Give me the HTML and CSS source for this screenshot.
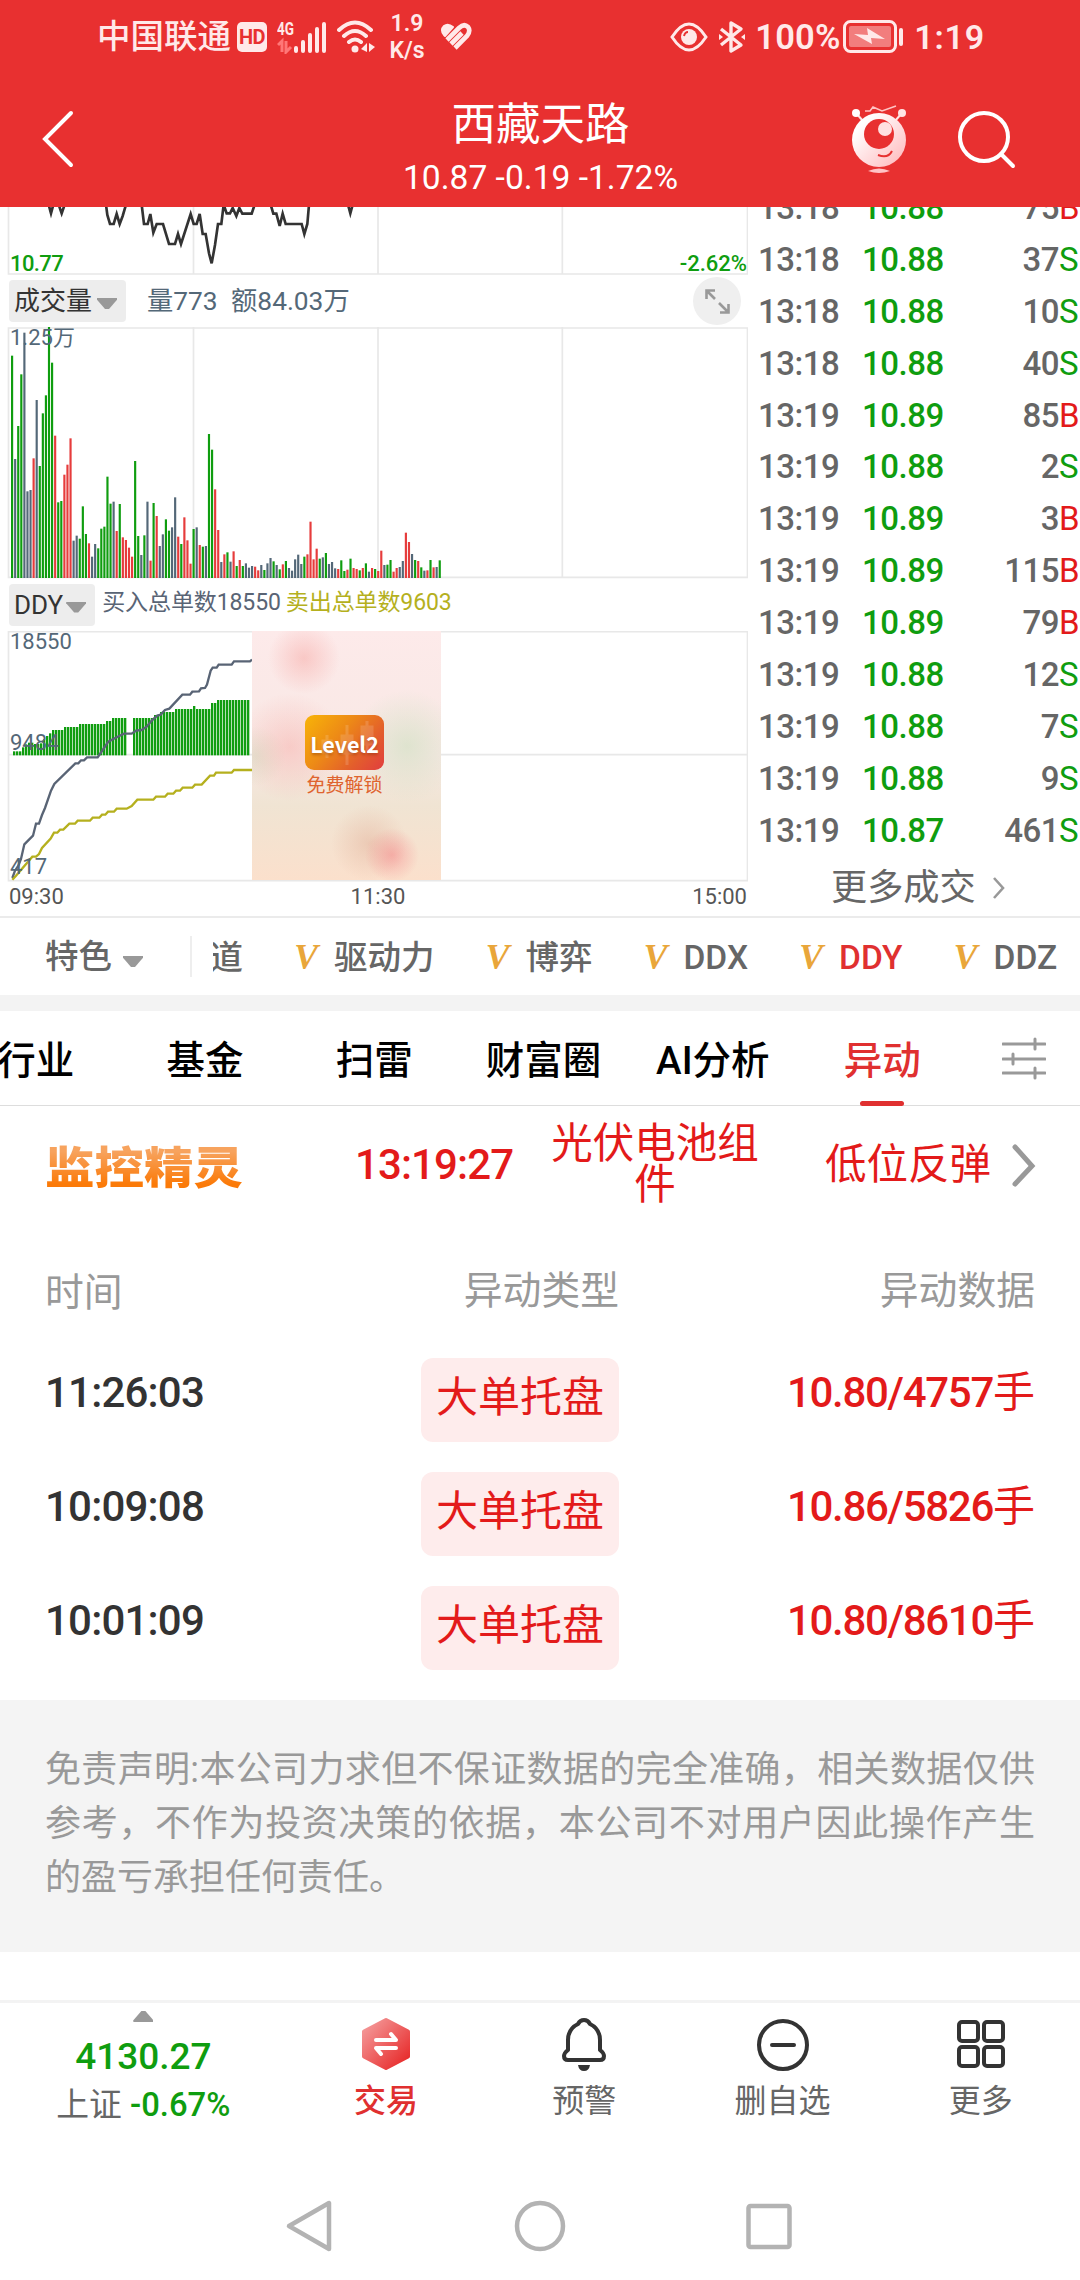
FILE: index.html
```html
<!DOCTYPE html>
<html lang="zh-CN">
<head>
  <meta charset="UTF-8" />
  <title>西藏天路</title>
  <meta name="viewport" content="width=device-width, initial-scale=1.0" />
  <link rel="stylesheet" href="styles.css">
</head>
<body>
  <header class="top">
    <!-- system status bar -->
    <div class="status">
      <div class="status-left">
        <span class="carrier">中国联通</span>
        <span class="hd">HD</span>
        <svg class="signal" width="50" height="34" viewBox="0 0 50 34">
          <text x="0" y="15" class="sig-text" textLength="17" lengthAdjust="spacingAndGlyphs">4G</text>
          <path d="M1 25l4-4v11M9 21v11l5-5" fill="none" stroke="#ff7777" stroke-width="3"/>
          <path d="M19 28v3M26 22v9M33 15v16M40 9v22M47 4v27" stroke="#ffe9e9" stroke-width="4" stroke-linecap="round"/>
        </svg>
        <svg class="wifi" width="38" height="34" viewBox="0 0 38 34">
          <path d="M2 10Q18-5 34 10M7 16Q18 6 29 16M12 22Q18 17 24 22" fill="none" stroke="#ffe9e9" stroke-width="4" stroke-linecap="round"/>
          <circle cx="18" cy="29" r="3.5" fill="#ffe9e9"/>
          <path d="M24 29l6-6v9zM32 23v9l6-5z" fill="#ffe9e9"/>
        </svg>
        <span class="speed">1.9<br>K/s</span>
        <svg class="heart" width="32" height="30" viewBox="0 0 32 30">
          <path d="M4 13Q0 8 4 4Q8 1 13 5L5 14z" fill="#ffe9e9" stroke="#ffe9e9" stroke-width="2" stroke-linejoin="round"/>
          <path d="M7 18L19 6Q24 1 28 5Q31 9 27 14L15 26M11 22L22 11" fill="none" stroke="#ffe9e9" stroke-width="4.6"/>
        </svg>
      </div>
      <div class="status-right">
        <svg width="38" height="32" viewBox="0 0 38 32">
          <path d="M2 16Q19-10 36 16Q19 42 2 16z" fill="none" stroke="#ffe9e9" stroke-width="3"/>
          <circle cx="19" cy="16" r="8" fill="#ffe9e9"/>
          <path d="M14 15q1-4 4-4" fill="none" stroke="#e83030" stroke-width="2"/>
        </svg>
        <svg class="bt" width="28" height="34" viewBox="0 0 28 34">
          <path d="M3 9L23 25L13 31V3L23 9L3 25" fill="none" stroke="#ffe9e9" stroke-width="3.4" stroke-linejoin="round"/>
          <path d="M1 14l4 3-4 3zM27 14l-4 3 4 3z" fill="#ffe9e9"/>
        </svg>
        <span class="battery-text">100%</span>
        <svg class="battery" width="62" height="34" viewBox="0 0 62 34">
          <rect x="1.5" y="1.5" width="51" height="30" rx="6" fill="none" stroke="#ffe9e9" stroke-width="3"/>
          <rect x="6" y="6" width="42" height="21" rx="2" fill="#f27d7d"/>
          <path d="M11 14l14 1-1-7 18 11-14-1 1 6z" fill="#ffe9e9"/>
          <rect x="56" y="8" width="4" height="18" rx="2" fill="#ffe9e9"/>
        </svg>
        <span class="clock">1:19</span>
      </div>
    </div>

    <!-- title bar -->
    <div class="title-bar">
      <svg class="back" width="32" height="58" viewBox="0 0 32 58">
        <path d="M29 3L3 29L29 55" fill="none" stroke="#fff" stroke-width="4" stroke-linecap="round"/>
      </svg>
      <div class="stock">
        <h1>西藏天路</h1>
        <p>10.87 -0.19 -1.72%</p>
      </div>
      <div class="title-actions">
        <svg width="58" height="70" viewBox="0 0 58 70">
          <defs>
            <linearGradient id="bot" x1="0" y1="0" x2="1" y2="1">
              <stop offset="0.2" stop-color="#fff"/><stop offset="1" stop-color="#ffb5b8"/>
            </linearGradient>
          </defs>
          <path d="M5 8L12 16M51 8L44 16" stroke="#ffe4e4" stroke-width="2"/>
          <circle cx="5" cy="8" r="4" fill="#fff"/><circle cx="51" cy="8" r="4" fill="#ffe4e4"/>
          <path d="M14 6h5l3-4 9 4L45 1" fill="none" stroke="#ffc4c4" stroke-width="1.6"/>
          <circle cx="28" cy="35" r="27" fill="url(#bot)"/>
          <circle cx="28" cy="29" r="15" fill="#e83030"/>
          <circle cx="34" cy="24" r="7" fill="#ffe0e0"/>
          <path d="M27 50Q37 54 41 46" fill="none" stroke="#e83030" stroke-width="2"/>
          <path d="M17 66q11-5 22 0q-11 4-22 0z" fill="#ffc4c6"/>
        </svg>
        <svg class="search" width="60" height="62" viewBox="0 0 60 62">
          <circle cx="27" cy="28" r="24" fill="none" stroke="#fff" stroke-width="4"/>
          <path d="M44 45L56 57" stroke="#fff" stroke-width="4" stroke-linecap="round"/>
        </svg>
      </div>
    </div>
  </header>

  <main>
    <section class="quote">
      <div class="charts">
        <!-- price -->
        <div class="chart price-chart">
          <svg width="748" height="68" viewBox="0 0 2244 204">
            <path class="grid" d="M25.5 0V201H2242.5V0M580.5 0V201M1134 0V201M1687 0V201"/>
            <g class="price-line" transform="translate(0,-21)">
              <polyline points="146,14 153,40 160,14"/>
              <polyline points="176,14 185,40 194,14"/>
              <polyline points="318,14 322,45 330,72 341,72 350,42 359,72 368,48 378,14"/>
              <polyline points="425,14 432,72 443,72 451,42 460,98 470,72 489,72 507,132 525,132 534,102 543,132 572,42 581,72 590,72 599,42 608,102 617,102 627,160 635,190 645,135 654,72 664,72 671,14 680,40 690,40 698,24 709,48 718,24 727,41 755,41 764,14"/>
              <polyline points="812,14 820,41 829,41 839,78 848,41 857,72 905,72 913,102 922,72 927,14"/>
              <polyline points="1044,14 1051,40 1058,14"/>
            </g>
          </svg>
          <span class="low">10.77</span>
          <span class="low-pct">-2.62%</span>
        </div>

        <!-- volume -->
        <div class="chart-head volume-head">
          <button class="pick">成交量<i class="caret"></i></button>
          <span class="volume-info">量773&ensp;额84.03万</span>
          <svg class="expand" width="48" height="48" viewBox="0 0 48 48">
            <circle cx="24" cy="24" r="24" fill="#efefef"/>
            <path d="M22 13.5H13.5V22M14 14L22 22M27 35.5H35.5V27M35 35L26 26" fill="none" stroke="#999" stroke-width="2.6"/>
          </svg>
        </div>
        <div class="chart volume">
          <span class="mark mark-top">1.25万</span>
          <svg id="volumeChart" width="748" height="252" viewBox="0 0 2244 756">
            <path class="grid" d="M25.5 3H2242.5V751H25.5ZM580.5 0V751M1134 0V751M1687 0V751"/>
          </svg>
        </div>

        <!-- ddy -->
        <div class="chart-head ddy-head">
          <button class="pick">DDY<i class="caret"></i></button>
          <span class="buy">买入总单数18550</span>
          <span class="sell">卖出总单数9603</span>
        </div>
        <div class="chart ddy">
          <svg id="ddyChart" width="748" height="252" viewBox="0 0 2244 756">
            <path class="grid" d="M25.5 2H2242.5V749H25.5ZM25.5 371H2242.5"/>
            <g id="ddyBars"></g>
            <g transform="translate(0,-181)" fill="none" stroke-width="7">
              <polyline stroke="#596475" points="37,922 45,900 55,885 63,865 73,821 99,795 108,759 117,759 126,733 135,712 153,660 163,640 226,578 235,578 243,569 252,569 261,560 293,560 310,535 325,513 350,500 372,489 395,489 408,480 425,478 440,468 455,450 472,435 482,432 495,418 508,414 547,372 570,372 577,363 597,362 603,353 615,352 621,342 632,300 638,291 650,291 656,282 695,282 702,272 750,272 756,267"/>
              <polyline stroke="#b5b01e" points="37,927 48,915 97,858 108,858 117,850 126,832 152,804 162,786 172,786 180,777 190,777 208,759 225,759 233,750 270,750 278,741 298,741 306,732 316,732 324,723 342,723 350,714 380,714 395,706 412,687 460,687 468,678 495,678 503,669 520,669 528,660 540,660 548,651 577,651 585,642 605,642 630,615 642,615 648,606 695,606 702,598 756,598"/>
            </g>
          </svg>
          <span class="mark mark-top">18550</span>
          <span class="mark mark-mid">9484</span>
          <span class="mark mark-low">417</span>
          <div class="lock">
            <div class="level2">
              <svg width="79" height="55" viewBox="0 0 79 55">
                <path d="M22 20V43M18 26h8v11h-8zM42 10V50M37 21h10v17H37zM62 6V36M57 12h10v17H57z" fill="#fff" stroke="#fff" stroke-width="3" opacity=".14"/>
              </svg>
              <b>Level2</b>
            </div>
            <span>免费解锁</span>
          </div>
        </div>
        <div class="axis"><span>09:30</span><span>11:30</span><span>15:00</span></div>
      </div>

      <!-- tick list, filled by charts.js -->
      <div class="ticks">
        <div id="tickRows"></div>
        <a class="more">更多成交
          <svg width="14" height="24" viewBox="0 0 14 24"><path d="M2 2L11 12L2 22" fill="none" stroke="#999" stroke-width="2.6"/></svg>
        </a>
      </div>
    </section>

    <nav class="features">
      <div class="feature-pick">特色<i class="caret"></i></div>
      <div class="feature-list">
        <span class="cut">道</span>
        <span><em>V</em>驱动力</span>
        <span><em>V</em>博弈</span>
        <span><em>V</em>DDX</span>
        <span class="on"><em>V</em>DDY</span>
        <span><em>V</em>DDZ</span>
      </div>
    </nav>

    <nav class="tabs">
      <span>行业</span>
      <span>基金</span>
      <span>扫雷</span>
      <span>财富圈</span>
      <span>AI分析</span>
      <span class="on">异动</span>
      <svg width="44" height="44" viewBox="0 0 44 44">
        <path d="M1 8H43M1 23H43M1 37H43" stroke="#999" stroke-width="3" stroke-linecap="round"/>
        <path d="M33 3V13M11 18V28M33 32V42" stroke="#999" stroke-width="3" stroke-linecap="round"/>
      </svg>
    </nav>

    <section class="monitor">
      <strong class="monitor-logo">监控精灵</strong>
      <span class="monitor-time">13:19:27</span>
      <span class="monitor-name">光伏电池组件</span>
      <span class="monitor-type">低位反弹</span>
      <svg width="24" height="44" viewBox="0 0 24 44"><path d="M3 4L20 23L3 41" fill="none" stroke="#999" stroke-width="5" stroke-linecap="round"/></svg>
    </section>

    <section class="moves">
      <div class="move move-head"><span>时间</span><span>异动类型</span><span>异动数据</span></div>
      <div class="move"><span class="num">11:26:03</span><b>大单托盘</b><span class="data">10.80/4757<i>手</i></span></div>
      <div class="move"><span class="num">10:09:08</span><b>大单托盘</b><span class="data">10.86/5826<i>手</i></span></div>
      <div class="move"><span class="num">10:01:09</span><b>大单托盘</b><span class="data">10.80/8610<i>手</i></span></div>
    </section>

    <p class="disclaimer">免责声明:本公司力求但不保证数据的完全准确，相关数据仅供参考，不作为投资决策的依据，本公司不对用户因此操作产生的盈亏承担任何责任。</p>
  </main>

  <footer class="bottom">
    <div class="index">
      <i class="up"></i>
      <strong>4130.27</strong>
      <span>上证 <b>-0.67%</b></span>
    </div>
    <div class="action trade">
      <svg width="54" height="56" viewBox="0 0 54 56">
        <defs>
          <linearGradient id="hex" x1="0" y1="0" x2="1" y2="1">
            <stop offset="0" stop-color="#f5a0a0"/><stop offset="1" stop-color="#e62222"/>
          </linearGradient>
        </defs>
        <path d="M27 3L49 14.500V39.500L27 51L5 39.500V14.500Z" fill="url(#hex)" stroke="url(#hex)" stroke-width="4" stroke-linejoin="round"/>
        <path d="M17 23H37L32 17M37 31H17L22 37" fill="none" stroke="#fff" stroke-width="4" stroke-linecap="round" stroke-linejoin="round"/>
      </svg>
      <span>交易</span>
    </div>
    <div class="action">
      <svg width="54" height="56" viewBox="0 0 54 56" fill="none" stroke="#333" stroke-width="4" stroke-linejoin="round">
        <path d="M27 3Q31 3 33 7Q43 12 43 23V33Q47 36 47 39Q47 43 43 43H11Q7 43 7 39Q7 36 11 33V23Q11 12 21 7Q23 3 27 3z"/>
        <path d="M21 48h12q-1 6-6 6t-6-6z" fill="#333" stroke="none"/>
      </svg>
      <span>预警</span>
    </div>
    <div class="action">
      <svg width="54" height="56" viewBox="0 0 54 56" fill="none" stroke="#333" stroke-width="4">
        <circle cx="27" cy="28" r="24"/><path d="M16 28H38" stroke-linecap="round"/>
      </svg>
      <span>删自选</span>
    </div>
    <div class="action">
      <svg width="54" height="56" viewBox="0 0 54 56" fill="none" stroke="#333" stroke-width="4">
        <rect x="5" y="5" width="19" height="19" rx="3"/><rect x="30" y="5" width="19" height="19" rx="3"/>
        <rect x="5" y="30" width="19" height="19" rx="3"/><rect x="30" y="30" width="19" height="19" rx="3"/>
      </svg>
      <span>更多</span>
    </div>
  </footer>

  <div class="sysnav">
    <svg width="54" height="54" viewBox="0 0 54 54"><path d="M45 4V50L5 27Z"/></svg>
    <svg width="54" height="54" viewBox="0 0 54 54"><circle cx="27" cy="27" r="23"/></svg>
    <svg width="54" height="54" viewBox="0 0 54 54"><rect x="6.5" y="7" width="41" height="41" rx="2"/></svg>
  </div>

  <script src="charts.js"></script>
</body>
</html>
```
FILE: styles.css
```css
/* ---------- theme ---------- */
:root{
  --brand:#e83030;
  --red:#e31a1a;
  --green:#0f9d0f;
  --slate:#546878;
  --line:#ebebeb;
  --grey:#666;
  --muted:#999;
}

*,*::before,*::after{box-sizing:border-box;}
body{
  margin:0;
  width:1080px;
  height:2280px;
  overflow:hidden;
  display:flex;
  flex-direction:column;
  background:#fff;
  color:#333;
  font-family:Roboto,"Noto Sans CJK SC",sans-serif;
}
h1,p{margin:0;font-weight:400;}
svg{display:block;flex-shrink:0;}
button{border:none;margin:0;font-family:inherit;}

.caret{
  display:inline-block;
  width:20px;
  height:11px;
  background:#999;
  clip-path:polygon(0 0,100% 0,100% 15%,60% 100%,40% 100%,0 15%);
}

/* ---------- header ---------- */
.top{
  height:207px;
  flex-shrink:0;
  background:var(--brand);
  color:#fff;
}
.status{
  height:73px;
  padding:0 95px 0 97px;
  display:flex;
  justify-content:space-between;
  align-items:center;
  color:#ffe9e9;
}
.status-left,.status-right{display:flex;align-items:center;}
.carrier{font-size:33.5px;line-height:50px;font-weight:500;}
.hd{
  width:30px;
  height:30px;
  margin-left:6px;
  border-radius:5px;
  background:#ffe9e9;
  color:var(--brand);
  font-size:20px;
  font-weight:700;
  letter-spacing:-.5px;
  line-height:31px;
  text-align:center;
}
.signal{margin-left:10px;}
.sig-text{font-size:19px;font-weight:700;fill:#ffe9e9;}
.wifi{margin-left:10px;}
.speed{
  width:38px;
  margin-left:13px;
  font-size:23px;
  font-weight:600;
  line-height:27px;
  text-align:center;
}
.heart{margin-left:14px;}
.bt{margin-left:10px;}
.battery-text{width:84px;margin-left:9px;font-size:34.5px;font-weight:600;letter-spacing:.2px;white-space:nowrap;}
.battery{margin-left:4px;}
.clock{margin-left:9px;font-size:34px;font-weight:600;letter-spacing:.8px;}

.title-bar{
  height:134px;
  padding:0 63px 0 42px;
  display:grid;
  grid-template-columns:1fr auto 1fr;
}
.back{margin-top:37px;}
.stock{margin-left:22px;text-align:center;}
.stock h1{margin-top:19px;font-size:44.5px;line-height:66px;}
.stock p{font-size:33.6px;line-height:40px;}
.title-actions{
  display:flex;
  justify-content:flex-end;
  padding-top:32px;
}
.search{margin:4px 0 0 48px;}

/* ---------- charts ---------- */
.quote{
  height:711px;
  display:flex;
  border-bottom:2px solid var(--line);
}
.charts{width:748px;}
.chart{position:relative;}
.grid{fill:none;stroke:#e8e8e8;stroke-width:5;}
.price-line polyline{fill:none;stroke:#333;stroke-width:8;}

.low,.low-pct,.mark{
  position:absolute;
  font-size:22px;
  font-weight:500;
  line-height:24px;
}
.low{left:10px;top:45px;color:var(--green);letter-spacing:-.6px;}
.low-pct{right:1px;top:45px;color:var(--green);}
.mark{left:10px;color:var(--slate);font-weight:400;}
.volume .mark-top{top:-1px;line-height:24px;}
.ddy .mark-top{top:-1px;}
.mark-mid{top:100px;}
.mark-low{top:224px;}

.chart-head{display:flex;align-items:center;padding-left:9px;}
.volume-head{height:52px;}
.ddy-head{height:52px;padding-bottom:1px;font-size:23px;}
.pick{
  height:42px;
  padding:0 9px 0 5px;
  display:flex;
  align-items:center;
  gap:5px;
  border-radius:4px;
  background:#ededed;
  color:#333;
  font-size:26px;
  line-height:38px;
}
.ddy-head .pick{gap:3px;}
.pick .caret{margin-top:5px;}
.volume-info{margin-left:21px;font-size:26.3px;color:var(--slate);line-height:38px;}
.expand{margin-left:auto;margin-right:7px;}
.volume,.ddy{height:252px;}
.buy{margin:-3px 0 0 7px;color:#596475;line-height:36px;letter-spacing:-.1px;}
.sell{margin:-3px 0 0 5px;color:#b5b01e;line-height:36px;letter-spacing:-.1px;}

.lock{
  position:absolute;
  left:252px;
  top:0;
  width:189px;
  height:249px;
  display:flex;
  flex-direction:column;
  align-items:center;
  padding:84px 4px 0 0;
  background:
    radial-gradient(circle at 52px 27px,rgba(244,140,135,.36) 0,transparent 36px),
    radial-gradient(circle at 140px 224px,rgba(244,110,120,.42) 0,transparent 27px),
    radial-gradient(circle at 117px 212px,rgba(215,150,125,.32) 0,transparent 38px),
    radial-gradient(circle at 38px 116px,rgba(247,160,155,.4) 0,transparent 54px),
    radial-gradient(circle at 155px 115px,rgba(205,224,192,.6) 0,transparent 56px),
    radial-gradient(circle at 4px 125px,rgba(205,222,190,.5) 0,transparent 30px),
    linear-gradient(180deg,#fdeaea 0%,#f8e8e4 50%,#f0e4d3 70%,#fbe0cc 100%);
}
.level2{
  position:relative;
  width:79px;
  height:55px;
  border-radius:9px;
  background:linear-gradient(130deg,#f8b408 0%,#ed8a16 40%,#e35e2c 72%,#e13d3f 100%);
}
.level2 b{
  position:absolute;
  inset:0;
  color:#fff;
  font:600 21.5px/57px "Noto Sans CJK SC",sans-serif;
  text-align:center;
  text-shadow:0 2px 3px rgba(120,40,0,.4);
}
.lock>span{margin-top:3px;font-size:19px;line-height:26px;color:#df642f;}

.axis{
  display:flex;
  justify-content:space-between;
  padding:1px 1px 0 9px;
  font-size:22px;
  line-height:26px;
  color:#555;
}

/* ---------- ticks ---------- */
.ticks{
  width:332px;
  overflow:hidden;
  font-size:33px;
  font-weight:500;
  color:var(--grey);
}
#tickRows{margin-top:-26px;}
.tick{
  height:51.9px;
  display:grid;
  grid-template-columns:104px 90px 1fr 21px;
  padding-left:10px;
  line-height:54px;
  letter-spacing:-.5px;
}
.tick .vol{text-align:right;}
.tick .price{color:var(--green);}
.tick .s{color:var(--green);font-weight:400;}
.tick .b{color:var(--red);font-weight:400;}
.more{
  display:flex;
  align-items:center;
  gap:16px;
  margin:8px 0 0 83px;
  font-size:36.2px;
  font-weight:400;
  line-height:48px;
}

/* ---------- feature strip ---------- */
.features{
  height:93px;
  display:flex;
  align-items:center;
  border-bottom:16px solid #f3f3f3;
  color:var(--grey);
  font-size:33.5px;
  font-weight:500;
}
.feature-pick{
  width:192px;
  height:41px;
  padding-left:45px;
  border-right:2px solid #eee;
  line-height:42px;
}
.feature-pick .caret{margin-left:11px;vertical-align:1px;}
.feature-list{display:flex;gap:51px;padding:3px 0 0 21px;line-height:44px;white-space:nowrap;}
.feature-list .cut{width:30px;direction:rtl;overflow:hidden;}
.feature-list em{
  display:inline-block;
  width:40px;
  color:#e9a63a;
  font:italic 700 36px/36px "Liberation Serif",serif;
}
.features .on,.tabs .on{color:#e03030;}

/* ---------- tabs ---------- */
.tabs{
  height:95px;
  margin-left:-49px;
  display:flex;
  align-items:center;
  border-bottom:1px solid #ddd;
  color:#000;
  font-size:38.5px;
  font-weight:500;
}
.tabs span{
  width:169.3px;
  height:94px;
  line-height:100px;
  text-align:center;
}
.tabs .on{position:relative;}
.tabs .on::after{
  content:'';
  position:absolute;
  left:63px;
  bottom:-1px;
  width:44px;
  height:5px;
  border-radius:3px;
  background:#e03030;
}
.tabs svg{margin-left:35px;}

/* ---------- monitor row ---------- */
.monitor{
  height:116px;
  display:flex;
  align-items:center;
  padding:0 44px 0 45px;
  color:var(--red);
  font-size:41.5px;
}
.monitor-logo{
  width:200px;
  margin-top:9px;
  font-size:49.5px;
  font-weight:900;
  line-height:56px;
  background:linear-gradient(180deg,#f7a35e 15%,#fb7a08 80%);
  -webkit-background-clip:text;
  background-clip:text;
  color:transparent;
  transform:scaleY(.9);
}
.monitor-time{width:158px;margin-left:110px;font-size:42px;font-weight:500;letter-spacing:-.9px;}
.monitor-name{width:210px;margin-left:37px;line-height:41px;text-align:center;}
.monitor-type{margin:2px 0 0 65px;white-space:nowrap;line-height:50px;}
.monitor svg{margin:2px 0 0 auto;}

/* ---------- moves table ---------- */
.moves{height:478px;padding:12px 45px 0;}
.move{
  height:114px;
  display:grid;
  grid-template-columns:376px 198px 1fr;
  font-size:42px;
  line-height:90px;
}
.move-head{height:124px;color:var(--muted);font-size:38.8px;line-height:114px;}
.move-head span:first-child{line-height:118px;}
.move-head span:nth-child(2){text-align:right;}
.move span:last-child{text-align:right;}
.move .num{font-weight:500;letter-spacing:-.8px;line-height:69px;}
.move b{
  height:84px;
  border-radius:12px;
  background:#feecec;
  color:var(--red);
  font-weight:400;
  line-height:80px;
  text-align:center;
}
.move .data{color:var(--red);font-weight:500;letter-spacing:-1.3px;line-height:69px;}
.data i{font-style:normal;font-weight:400;letter-spacing:0;}

.disclaimer{
  height:252px;
  padding:43px 45px 0;
  background:#f4f4f4;
  color:var(--muted);
  font-size:36px;
  line-height:54px;
  text-align:justify;
}

/* ---------- bottom bar ---------- */
.bottom{
  margin-top:48px;
  height:150px;
  display:flex;
  flex-shrink:0;
  border-top:3px solid #f3f3f3;
  font-size:32px;
  color:var(--grey);
}
.index{
  width:287px;
  display:flex;
  flex-direction:column;
  align-items:center;
}
.up{
  width:20px;
  height:11px;
  margin-top:8px;
  background:#999;
  clip-path:polygon(40% 0,60% 0,100% 85%,100% 100%,0 100%,0 85%);
}
.index strong{margin-top:11px;font-size:37px;font-weight:500;line-height:48px;color:var(--green);}
.index b{font-weight:500;color:var(--green);}
.index span{font-size:32.8px;line-height:48px;}
.action{
  width:198.5px;
  padding-top:14px;
  display:flex;
  flex-direction:column;
  align-items:center;
}
.action span{margin-top:4px;line-height:48px;}
.trade{color:#e03030;}
.trade span{font-weight:500;}

.sysnav{
  padding-top:49px;
  display:flex;
  justify-content:center;
  gap:175px;
}
.sysnav svg{fill:none;stroke:#b3b3b3;stroke-width:4.5;stroke-linejoin:round;}
```
FILE: charts.js
```js
const $ = (id) => document.getElementById(id);
const COLORS = { g: "#0f9d0f", b: "#546878", r: "#e63c3c" };

/* one entry per minute: height + direction */
const volume = (
  "667g 357b 456g 611g 736b 260b 264b 359r 534b 336g 494g 548g 753g 646g 427r 227g 231g 310r 340r 419r " +
  "112b 127b 118g 215g 132g 104r 64b 102b 89g 148g 154g 304g 223g 229b 141r 222g 122r 114r 91r 64r " +
  "351g 126g 69b 128g 229b 52r 225g 186r 96b 131b 176g 142g 152b 242b 124r 102g 182r 113r 43r 147g " +
  "152b 99r 94g 96b 432g 385g 266r 144r 48b 71r 77g 49b 80r 36g 54r 36g 44b 31b 36b 34r " +
  "23r 39b 24g 44b 60b 50g 39b 26g 41r 51g 30b 22b 56b 70b 42b 64g 71r 169r 56r 88r " +
  "58g 62b 75g 42b 48b 29b 27r 53g 21g 25r 58g 30r 27r 23g 30r 44g 19b 30r 27g 21r " +
  "82r 39b 40g 54g 19r 30r 33b 51b 136r 108r 72b 54g 51r 32g 22b 23r 54g 32r 33b 53g"
).split(" ");

let bars = "";
volume.forEach((v, i) => {
  const h = parseInt(v, 10);
  bars += `<rect x="${33 + i * 9.23}" y="${753 - h}" width="6.5" height="${h}" fill="${COLORS[v.slice(-1)]}"/>`;
});
$("volumeChart").insertAdjacentHTML("beforeend", bars);

/* ddy: [last x, height] steps */
const steps = [
  [58, 12], [68, 24], [78, 33], [96, 38], [114, 34], [122, 36], [131, 48], [140, 58], [149, 66],
  [186, 76], [230, 85], [311, 94], [329, 103], [380, 112], [391, 0], [455, 112], [474, 121],
  [517, 130], [571, 139], [580, 148], [625, 139], [643, 157], [752, 166]
];
let ddy = "";
for (let x = 39; x < 750; x += 9) {
  const h = steps.find((s) => x < s[0])[1];
  ddy += `<rect x="${x}" y="${373 - h}" width="7" height="${h}" fill="${COLORS.g}"/>`;
}
$("ddyBars").innerHTML = ddy;

const ticks = [
  ["13:18", "10.88", 75, "B"], ["13:18", "10.88", 37, "S"], ["13:18", "10.88", 10, "S"],
  ["13:18", "10.88", 40, "S"], ["13:19", "10.89", 85, "B"], ["13:19", "10.88", 2, "S"],
  ["13:19", "10.89", 3, "B"], ["13:19", "10.89", 115, "B"], ["13:19", "10.89", 79, "B"],
  ["13:19", "10.88", 12, "S"], ["13:19", "10.88", 7, "S"], ["13:19", "10.88", 9, "S"],
  ["13:19", "10.87", 461, "S"]
];
$("tickRows").innerHTML = ticks.map(([t, p, v, side]) =>
  `<div class="tick"><span>${t}</span><span class="price">${p}</span><span class="vol">${v}</span><span class="${side.toLowerCase()}">${side}</span></div>`
).join("");
```
